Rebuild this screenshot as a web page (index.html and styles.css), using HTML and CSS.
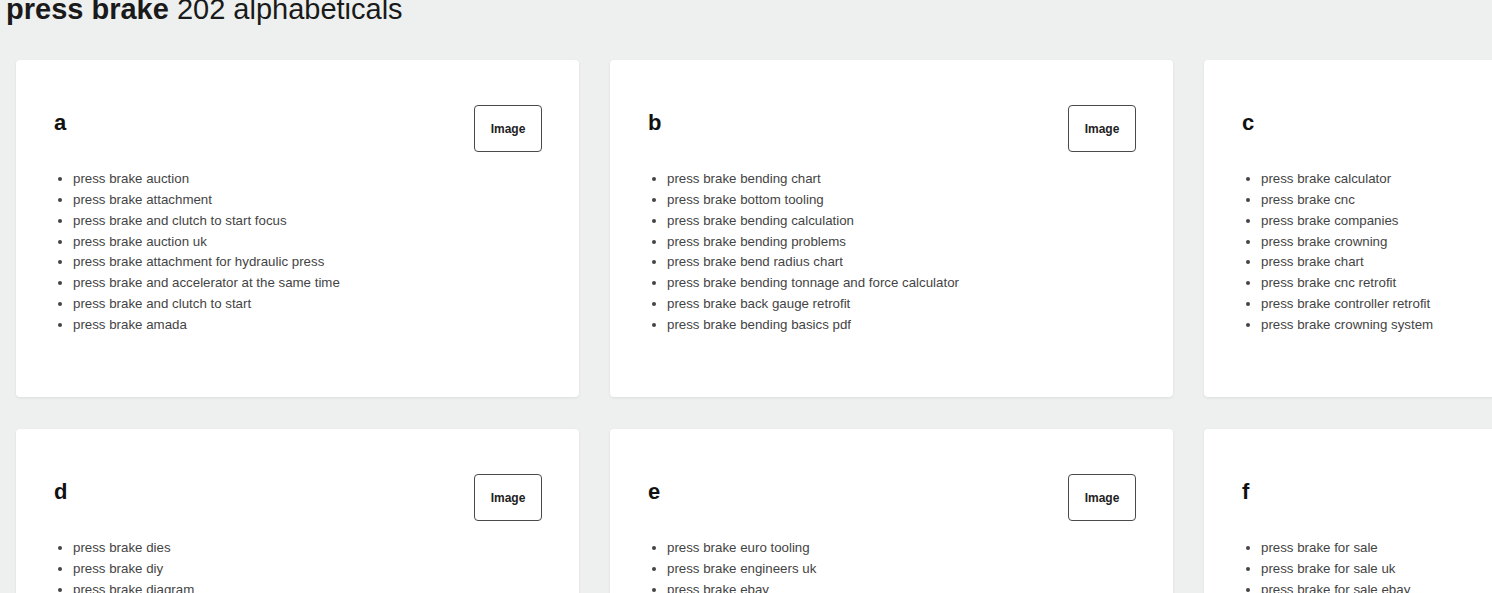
FILE: index.html
```html
<!DOCTYPE html>
<html lang="en">
<head>
<meta charset="utf-8">
<title>press brake 202 alphabeticals</title>
<link rel="stylesheet" href="styles.css">
</head>
<body>
<h1 class="page-title"><strong>press brake</strong> 202 alphabeticals</h1>
<div class="grid">
  <section class="card">
    <div class="card-head"><h2 class="letter">a</h2><button class="img-btn">Image</button></div>
    <ul class="terms">
      <li>press brake auction</li>
      <li>press brake attachment</li>
      <li>press brake and clutch to start focus</li>
      <li>press brake auction uk</li>
      <li>press brake attachment for hydraulic press</li>
      <li>press brake and accelerator at the same time</li>
      <li>press brake and clutch to start</li>
      <li>press brake amada</li>
    </ul>
  </section>
  <section class="card">
    <div class="card-head"><h2 class="letter">b</h2><button class="img-btn">Image</button></div>
    <ul class="terms">
      <li>press brake bending chart</li>
      <li>press brake bottom tooling</li>
      <li>press brake bending calculation</li>
      <li>press brake bending problems</li>
      <li>press brake bend radius chart</li>
      <li>press brake bending tonnage and force calculator</li>
      <li>press brake back gauge retrofit</li>
      <li>press brake bending basics pdf</li>
    </ul>
  </section>
  <section class="card">
    <div class="card-head"><h2 class="letter">c</h2><button class="img-btn">Image</button></div>
    <ul class="terms">
      <li>press brake calculator</li>
      <li>press brake cnc</li>
      <li>press brake companies</li>
      <li>press brake crowning</li>
      <li>press brake chart</li>
      <li>press brake cnc retrofit</li>
      <li>press brake controller retrofit</li>
      <li>press brake crowning system</li>
    </ul>
  </section>
  <section class="card">
    <div class="card-head"><h2 class="letter">d</h2><button class="img-btn">Image</button></div>
    <ul class="terms">
      <li>press brake dies</li>
      <li>press brake diy</li>
      <li>press brake diagram</li>
      <li>press brake dies for sale</li>
      <li>press brake dimensions</li>
      <li>press brake definition</li>
      <li>press brake die set</li>
      <li>press brake design</li>
    </ul>
  </section>
  <section class="card">
    <div class="card-head"><h2 class="letter">e</h2><button class="img-btn">Image</button></div>
    <ul class="terms">
      <li>press brake euro tooling</li>
      <li>press brake engineers uk</li>
      <li>press brake ebay</li>
      <li>press brake electric</li>
      <li>press brake estimating</li>
      <li>press brake equipment</li>
      <li>press brake explained</li>
      <li>press brake extensions</li>
    </ul>
  </section>
  <section class="card">
    <div class="card-head"><h2 class="letter">f</h2><button class="img-btn">Image</button></div>
    <ul class="terms">
      <li>press brake for sale</li>
      <li>press brake for sale uk</li>
      <li>press brake for sale ebay</li>
      <li>press brake forming</li>
      <li>press brake fingers</li>
      <li>press brake formula</li>
      <li>press brake force calculator</li>
      <li>press brake for sale craigslist</li>
    </ul>
  </section>
</div>
</body>
</html>
```

FILE: styles.css
```css
html, body {
  overflow: hidden;
}
body {
  margin: 0;
  padding: 0 0 0 6px;
  background: #eef0f0;
  font-family: "Liberation Sans", Arial, sans-serif;
  color: #222;
  width: 1900px;
}
.page-title {
  margin: -5px 0 0 0;
  font-size: 29px;
  line-height: 29px;
  font-weight: normal;
  color: #1a1a1a;
}
.page-title strong {
  font-weight: bold;
}
.grid {
  margin-top: 36px;
  margin-left: 10px;
  display: grid;
  grid-template-columns: repeat(3, 563px);
  column-gap: 31px;
  row-gap: 32px;
}
.card {
  box-sizing: border-box;
  height: 337px;
  background: #fff;
  border-radius: 4px;
  box-shadow: 0 1px 3px rgba(0, 0, 0, 0.08);
  padding: 45px 37px 0 38px;
}
.card-head {
  display: flex;
  justify-content: space-between;
  align-items: flex-start;
}
.letter {
  margin: 5px 0 0 0;
  font-size: 22px;
  line-height: 25px;
  font-weight: bold;
  color: #111;
}
.img-btn {
  box-sizing: border-box;
  width: 68px;
  height: 47px;
  border: 1px solid #4a4a4a;
  border-radius: 4px;
  background: #fff;
  font-family: "Liberation Sans", Arial, sans-serif;
  font-size: 12px;
  font-weight: bold;
  color: #222;
  padding: 0;
}
.terms {
  margin: 17px 0 0 0;
  padding-left: 19px;
  font-size: 13.3px;
  line-height: 20.85px;
  color: #444;
}
```
